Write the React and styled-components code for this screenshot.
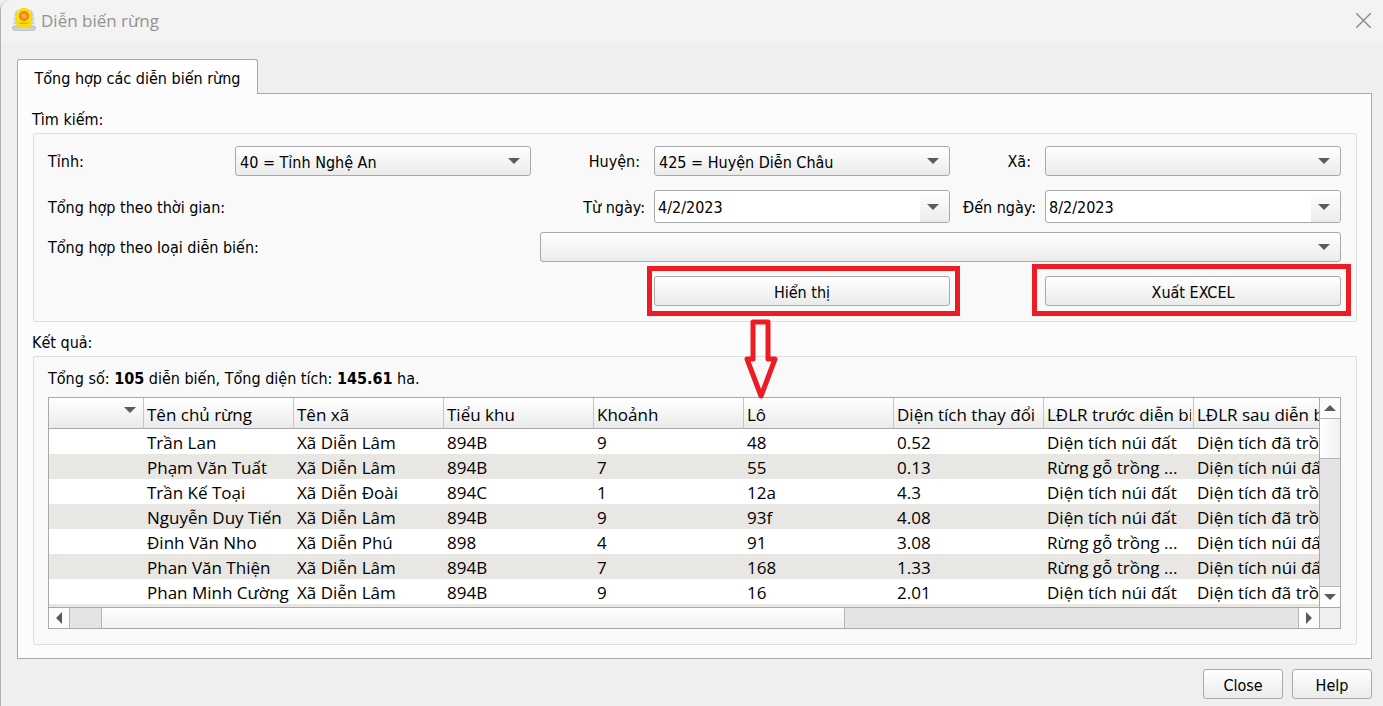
import React from 'react';
import styled, { createGlobalStyle } from 'styled-components';

const GlobalStyle = createGlobalStyle`
  *, *::before, *::after { box-sizing: border-box; }
  body { margin: 0; background: #efefef; }
  body, button, input, select {
    font-family: "DejaVu Sans Condensed", "Open Sans", sans-serif;
    font-size: 16px;
    color: #000;
  }
`;

const line = '#a9a9a9';
const face = 'linear-gradient(#ffffff, #ebebeb)';

const Window = styled.div`
  min-height: 100vh;
  display: flex;
  flex-direction: column;
  background: #efefef;
  border-left: 1px solid #b0b0b0;
  border-top-left-radius: 10px;
  overflow: hidden;
`;

const TitleBar = styled.header`
  height: 43px;
  flex: none;
  display: flex;
  align-items: center;
  gap: 5px;
  padding: 0 12px 3px 11px;
  background: #f3f3f3;
`;

const Title = styled.h1`
  flex: 1;
  margin: 0;
  font-family: "Open Sans", "Noto Sans", sans-serif;
  font-size: 17px;
  font-weight: 400;
  color: #929292;
`;

const CloseIcon = styled.button`
  padding: 0;
  border: 0;
  background: none;
  display: flex;
`;

const Content = styled.main`
  flex: 1;
  display: flex;
  flex-direction: column;
  padding: 16px 11px 0 16px;
`;

const Tab = styled.button`
  align-self: flex-start;
  position: relative;
  z-index: 1;
  width: 241px;
  height: 35px;
  margin-bottom: -1px;
  padding: 3px 0 0;
  border: 1px solid ${line};
  border-bottom: 0;
  border-radius: 3px 3px 0 0;
  background: linear-gradient(#ffffff, #fcfcfc);
`;

const Pane = styled.div`
  flex: 1;
  display: flex;
  flex-direction: column;
  padding: 14px 14px 13px 15px;
  border: 1px solid ${line};
  background: #fcfcfc;
`;

const GroupTitle = styled.h2`
  margin: 0 0 2px -1px;
  font-size: 16px;
  line-height: 23px;
  font-weight: 400;
`;

const Group = styled.section`
  padding: ${p => (p.$results ? '10px 15px 15px 14px' : '12px 15px 15px 14px')};
  margin-bottom: ${p => (p.$results ? '0' : '9px')};
  border: 1px solid #dedede;
  border-radius: 2px;
  background: #f9f9f9;
`;

const Form = styled.form`
  display: grid;
  grid-template-columns: 187px 1fr 123px 1fr 95px 1fr;
  grid-template-rows: 44px 42px 44px 30px;
  align-items: start;
`;

const Label = styled.label`
  line-height: ${p => (p.$tall ? '35px' : '31px')};
  white-space: nowrap;
  ${p => p.$end && `justify-self: end; padding-right: ${p.$end}px;`}
  ${p => p.$wide && 'grid-column: 1 / 3;'}
`;

const Field = styled.div`
  position: relative;
  display: flex;
  height: ${p => (p.$tall ? '33px' : '30px')};
  ${p => p.$wide && 'grid-column: 3 / 7; margin-left: 9px;'}
`;

const Select = styled.select`
  appearance: none;
  width: 100%;
  padding: 2px 34px 0 4px;
  border: 1px solid ${line};
  border-radius: 3px;
  background: ${face};
`;

const SelectArrow = styled.span`
  position: absolute;
  right: 11px;
  top: 9px;
  display: flex;
  pointer-events: none;
`;

const DateBox = styled.div`
  flex: 1;
  display: flex;
  border: 1px solid ${line};
  border-radius: 3px;
  background: #fff;
  overflow: hidden;
`;

const DateInput = styled.input`
  flex: 1;
  min-width: 0;
  padding: 1px 3px 0;
  border: 0;
  background: none;
`;

const DateButton = styled.button`
  width: 29px;
  display: flex;
  align-items: center;
  justify-content: center;
  padding: 0 3px 0 0;
  border: 0;
  background: ${face};
`;

const Button = styled.button`
  width: ${p => p.$width || '100%'};
  height: 30px;
  padding: 2px 0 0;
  border: 1px solid ${line};
  border-radius: 3px;
  background: ${face};
`;

const Callout = styled.div`
  position: relative;
  grid-column: ${p => p.$column};
  &::after {
    content: '';
    position: absolute;
    inset: ${p => p.$inset};
    border: 5px solid #ed1c24;
    pointer-events: none;
  }
`;

const DownArrow = styled.svg`
  position: absolute;
  z-index: 2;
  top: 43px;
  left: 90px;
`;

const Summary = styled.p`
  margin: 0 0 6px;
  line-height: 24px;
`;

const ScrollArea = styled.div`
  display: grid;
  grid-template-columns: minmax(0, 1fr) 21px;
  grid-template-rows: 209px 21px;
  border: 1px solid ${line};
  background: #fff;
`;

const Viewport = styled.div`
  overflow: hidden;
`;

const Table = styled.table`
  width: 1295px;
  table-layout: fixed;
  border-collapse: separate;
  border-spacing: 0;
  font-family: "Open Sans", "Noto Sans", sans-serif;
  font-size: 17px;
  tbody tr:nth-child(even) { background: #e8e7e3; }
`;

const Th = styled.th`
  width: ${p => (p.$first ? '95px' : '150px')};
  height: 31px;
  padding: 4px 2px 0 3px;
  border-right: 1px solid #c6c6c6;
  border-bottom: 1px solid ${line};
  background: ${face};
  font-weight: 400;
  text-align: left;
`;

const HeadText = styled.span`
  display: block;
  line-height: 24px;
  white-space: nowrap;
  overflow: hidden;
`;

const SortMark = styled.span`
  display: flex;
  justify-content: flex-end;
  padding: 0 5px 10px 0;
`;

const Td = styled.td`
  height: 25px;
  padding: 3px 0 0 3px;
  line-height: 22px;
  white-space: nowrap;
  overflow: hidden;
`;

const ScrollBar = styled.div`
  display: flex;
  flex-direction: ${p => (p.$vertical ? 'column' : 'row')};
  background: #e4e4e4;
  ${p => (p.$vertical ? `border-left: 1px solid ${line};` : `border-top: 1px solid ${line};`)}
`;

const ScrollButton = styled.button`
  flex: none;
  width: 20px;
  height: 20px;
  padding: 0;
  display: flex;
  align-items: center;
  justify-content: center;
  border: 0;
  background: #fcfcfc;
`;

const ScrollThumb = styled.div`
  flex: ${p => p.$size};
  border: solid #b5b5b5;
  ${p =>
    p.$vertical
      ? 'border-width: 1px 0; background: linear-gradient(90deg, #fff, #f0f0f0);'
      : 'border-width: 0 1px; background: linear-gradient(#fff, #f0f0f0);'}
`;

const ScrollTrack = styled.div`
  flex: ${p => p.$size};
  border: solid #b5b5b5;
  border-width: ${p => p.$edge || 0};
`;

const Corner = styled.div`
  border: solid ${line};
  border-width: 1px 0 0 1px;
  background: #efefef;
`;

const Footer = styled.footer`
  display: flex;
  justify-content: flex-end;
  gap: 9px;
  padding: 10px 0 7px;
`;

const turns = { down: 0, left: 90, up: 180, right: 270 };

function Triangle({ to = 'down' }) {
  return (
    <svg width="12" height="12" viewBox="0 0 12 12" aria-hidden="true">
      <path d="M0 3h12L6 9z" fill="#5b5b5b" transform={`rotate(${turns[to]} 6 6)`} />
    </svg>
  );
}

function Logo() {
  return (
    <svg width="24" height="24" viewBox="0 0 24 24" aria-hidden="true">
      <path d="M5 1C2 5 0 13 3 20h18c3-7 1-15-2-19l-2 18H7z" fill="#cfd0d2" />
      <path d="M2 8l3 2M1 12l4 2M1 16l5 1M22 8l-3 2M23 12l-4 2M23 16l-5 1" stroke="#ededee" />
      <path d="M0 18h24v3l-2 2H2l-2-2z" fill="#c6c7c9" />
      <path d="M3 21h18" stroke="#e2e2e2" />
      <path d="M12 0C8 0 5 2 4 8c-1 6 1 10 3 12h10c2-2 4-6 3-12-1-6-4-8-8-8z" fill="#f9dc0b" />
      <circle cx="12" cy="8" r="4" fill="#fba41c" stroke="#f47a20" strokeWidth="2" />
      <path d="M10 7l4 3M12 6v3" stroke="#fbc34a" />
      <path d="M8 14l2 1 2-1 2 1 2-1v2H8z" fill="#a5cc1a" />
    </svg>
  );
}

function Combo({ id, value, wide }) {
  return (
    <Field $wide={wide}>
      <Select id={id} defaultValue={value}>
        <option value={value}>{value}</option>
      </Select>
      <SelectArrow><Triangle /></SelectArrow>
    </Field>
  );
}

function DateField({ id, value }) {
  return (
    <Field $tall>
      <DateBox>
        <DateInput id={id} type="text" defaultValue={value} />
        <DateButton type="button" aria-label="Chọn ngày"><Triangle /></DateButton>
      </DateBox>
    </Field>
  );
}

const columns = ['Tên chủ rừng', 'Tên xã', 'Tiểu khu', 'Khoảnh', 'Lô', 'Diện tích thay đổi', 'LĐLR trước diễn biến', 'LĐLR sau diễn biến'];

const bare = 'Diện tích núi đất';
const planted = 'Diện tích đã trồng';
const timber = 'Rừng gỗ trồng ...';

const rows = [
  ['Trần Lan', 'Xã Diễn Lâm', '894B', '9', '48', '0.52', bare, planted],
  ['Phạm Văn Tuất', 'Xã Diễn Lâm', '894B', '7', '55', '0.13', timber, bare],
  ['Trần Kế Toại', 'Xã Diễn Đoài', '894C', '1', '12a', '4.3', bare, planted],
  ['Nguyễn Duy Tiến', 'Xã Diễn Lâm', '894B', '9', '93f', '4.08', bare, planted],
  ['Đinh Văn Nho', 'Xã Diễn Phú', '898', '4', '91', '3.08', timber, bare],
  ['Phan Văn Thiện', 'Xã Diễn Lâm', '894B', '7', '168', '1.33', timber, bare],
  ['Phan Minh Cường', 'Xã Diễn Lâm', '894B', '9', '16', '2.01', bare, planted],
  ['', '', '', '', '', '', '', ''],
];

export default function App() {
  return (
    <Window>
      <GlobalStyle />
      <TitleBar>
        <Logo />
        <Title>Diễn biến rừng</Title>
        <CloseIcon type="button" aria-label="Đóng">
          <svg width="15" height="15" viewBox="0 0 15 15">
            <path d="M0 0l15 15M15 0L0 15" stroke="#8a8a8a" strokeWidth="1.4" />
          </svg>
        </CloseIcon>
      </TitleBar>
      <Content>
        <Tab type="button">Tổng hợp các diễn biến rừng</Tab>
        <Pane>
          <GroupTitle>Tìm kiếm:</GroupTitle>
          <Group>
            <Form onSubmit={e => e.preventDefault()}>
              <Label htmlFor="province">Tỉnh:</Label>
              <Combo id="province" value="40 = Tỉnh Nghệ An" />
              <Label htmlFor="district" $end={14}>Huyện:</Label>
              <Combo id="district" value="425 = Huyện Diễn Châu" />
              <Label htmlFor="commune" $end={14}>Xã:</Label>
              <Combo id="commune" value="" />

              <Label as="span" $tall $wide>Tổng hợp theo thời gian:</Label>
              <Label htmlFor="from" $tall $end={9}>Từ ngày:</Label>
              <DateField id="from" value="4/2/2023" />
              <Label htmlFor="to" $tall $end={9}>Đến ngày:</Label>
              <DateField id="to" value="8/2/2023" />

              <Label htmlFor="kind" $wide>Tổng hợp theo loại diễn biến:</Label>
              <Combo id="kind" value="" wide />

              <Callout $column={4} $inset="-10px -10px -10px -7px">
                <Button type="submit">Hiển thị</Button>
                <DownArrow width="34" height="81" viewBox="0 0 34 81" aria-hidden="true">
                  <path
                    d="M9 3h15v37h7L17 77 3 40h6z"
                    fill="none"
                    stroke="#ed1c24"
                    strokeWidth="5"
                    strokeLinejoin="round"
                  />
                </DownArrow>
              </Callout>
              <Callout $column={6} $inset="-12px -10px -10px -13px">
                <Button type="button">Xuất EXCEL</Button>
              </Callout>
            </Form>
          </Group>

          <GroupTitle>Kết quả:</GroupTitle>
          <Group $results>
            <Summary>
              Tổng số: <b>105</b> diễn biến, Tổng diện tích: <b>145.61</b> ha.
            </Summary>
            <ScrollArea>
              <Viewport>
                <Table>
                  <thead>
                    <tr>
                      <Th $first aria-label="STT"><SortMark><Triangle /></SortMark></Th>
                      {columns.map(name => <Th key={name}><HeadText>{name}</HeadText></Th>)}
                    </tr>
                  </thead>
                  <tbody>
                    {rows.map((row, i) => (
                      <tr key={i}>
                        <Td />
                        {row.map((cell, j) => <Td key={j}>{cell}</Td>)}
                      </tr>
                    ))}
                  </tbody>
                </Table>
              </Viewport>
              <ScrollBar $vertical>
                <ScrollButton type="button" aria-label="Lên"><Triangle to="up" /></ScrollButton>
                <ScrollThumb $vertical $size={40} />
                <ScrollTrack $vertical $size={129} $edge="0 0 1px" />
                <ScrollButton type="button" aria-label="Xuống"><Triangle /></ScrollButton>
              </ScrollBar>
              <ScrollBar>
                <ScrollButton type="button" aria-label="Trái"><Triangle to="left" /></ScrollButton>
                <ScrollTrack $size={31} $edge="0 0 0 1px" />
                <ScrollThumb $size={744} />
                <ScrollTrack $size={454} $edge="0 1px 0 0" />
                <ScrollButton type="button" aria-label="Phải"><Triangle to="right" /></ScrollButton>
              </ScrollBar>
              <Corner />
            </ScrollArea>
          </Group>
        </Pane>
        <Footer>
          <Button type="button" $width="80px">Close</Button>
          <Button type="button" $width="80px">Help</Button>
        </Footer>
      </Content>
    </Window>
  );
}
